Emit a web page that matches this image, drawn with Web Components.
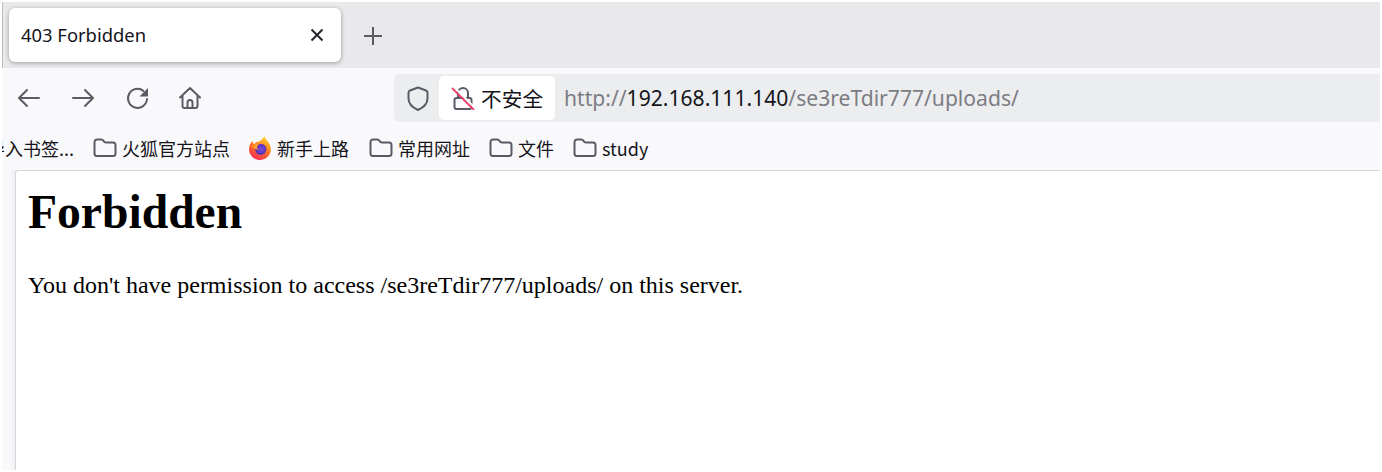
<!DOCTYPE html>
<html>
<head>
<meta charset="utf-8">
<title>403 Forbidden</title>
<style>
  html, body { margin: 0; height: 100%; background: #fff; overflow: hidden; }
  body { font-family: "Noto Sans", "Noto Sans CJK SC", sans-serif; }
  browser-window { height: 100%; }
</style>
</head>
<body>
<browser-window>
  <tab-strip title-text="403 Forbidden"></tab-strip>
  <nav-bar></nav-bar>
  <bookmark-bar>
    <span slot="cut">导入书签...</span>
    <bookmark-item>火狐官方站点</bookmark-item>
    <bookmark-item icon="firefox">新手上路</bookmark-item>
    <bookmark-item>常用网址</bookmark-item>
    <bookmark-item>文件</bookmark-item>
    <bookmark-item>study</bookmark-item>
  </bookmark-bar>
  <page-view>
    <h1 slot="heading">Forbidden</h1>
    <span slot="message">You don't have permission to access /se3reTdir777/uploads/ on this server.</span>
  </page-view>
</browser-window>

<script>
class BrowserWindow extends HTMLElement {
    constructor() {
        super();
        this.attachShadow({ mode: 'open' });
        this.shadowRoot.innerHTML = `
            <style>
                :host { display: flex; flex-direction: column; box-sizing: border-box; padding: 2px 2px 2px 2px; }
                ::slotted(page-view) { flex: 1; min-height: 0; }
            </style>
            <slot></slot>
        `;
    }
}

class TabStrip extends HTMLElement {
    constructor() {
        super();
        this.attachShadow({ mode: 'open' });
        this.shadowRoot.innerHTML = `
            <style>
                :host { display: flex; align-items: flex-start; height: 66px; background: #e9e9eb; border-left: 1px solid #bdbdbf; padding: 6px 0 0 6px; box-sizing: border-box; }
                .tab {
                    width: 332px; height: 54px; box-sizing: border-box; background: #fff; border-radius: 6px;
                    box-shadow: 0 1px 4px rgba(0,0,0,0.35);
                    display: flex; align-items: center; justify-content: space-between; padding: 0 16px 0 12px;
                    font: 18.4px "Noto Sans", "Noto Sans CJK SC", sans-serif; color: #15141a;
                }
                .label { margin-bottom: 2px; }
                svg { display: block; }
                .plus { margin: 18px 0 0 22px; }
            </style>
            <div class="tab">
                <span class="label"></span>
                <svg width="16" height="16" viewBox="0 0 16 16" fill="none" stroke="#26252b" stroke-width="2"><path d="M2.5 2.5l11 11M13.5 2.5l-11 11"/></svg>
            </div>
            <svg class="plus" width="20" height="20" viewBox="0 0 20 20" fill="none" stroke="#5b5b66" stroke-width="2"><path d="M10 1v18M1 10h18"/></svg>
        `;
    }
    connectedCallback() {
        this.shadowRoot.querySelector('.label').textContent = this.getAttribute('title-text');
    }
}

class NavBar extends HTMLElement {
    constructor() {
        super();
        this.attachShadow({ mode: 'open' });
        this.shadowRoot.innerHTML = `
            <style>
                :host { display: flex; align-items: center; height: 60px; background: #f9f9fb; box-sizing: border-box; padding: 0 0 0 15px; }
                svg { display: block; flex: none; }
                .btns { display: flex; gap: 30px; align-items: center; }
                .url {
                    margin-left: 191px; flex: 1; height: 48px; background: #ecedef; border-radius: 6px 0 0 6px;
                    display: flex; align-items: center; padding-left: 4px;
                }
                .shield { margin: 0 10px 0 9px; }
                .insecure {
                    display: flex; align-items: center; gap: 6px; height: 44px; width: 116px; box-sizing: border-box; padding-left: 12px;
                    background: #fff; border-radius: 5px; font: 20.7px "Noto Sans CJK SC", sans-serif; color: #15141a;
                }
                .addr { margin: 0 0 2px 9px; font: 21.1px "Noto Sans", sans-serif; color: #7c7c83; white-space: nowrap; }
                .addr b { font-weight: 400; color: #15141a; }
            </style>
            <div class="btns">
                <svg width="24" height="24" viewBox="0 0 24 24" fill="none" stroke="#5b5b66" stroke-width="2" stroke-linecap="round" stroke-linejoin="round"><path d="M2 12h20M10 4l-8 8 8 8"/></svg>
                <svg width="24" height="24" viewBox="0 0 24 24" fill="none" stroke="#5b5b66" stroke-width="2" stroke-linecap="round" stroke-linejoin="round"><path d="M2 12h20M14 4l8 8-8 8"/></svg>
                <svg width="24" height="24" viewBox="0 0 24 24" fill="none" stroke="#5b5b66" stroke-width="2" stroke-linecap="round" stroke-linejoin="round"><path d="M22 13a9.500 9.500 0 1 1-3.500-8"/><path d="M23 2v8.500h-8.500z" fill="#5b5b66" stroke="none"/></svg>
                <svg width="24" height="24" viewBox="0 0 24 24" fill="none" stroke="#5b5b66" stroke-width="2" stroke-linecap="round" stroke-linejoin="round"><path d="M1 11.500L11 2l10 9.500M3.500 9.500V20a2 2 0 0 0 2 2h11a2 2 0 0 0 2-2V9.500M8.500 22v-5.500a2.500 2.500 0 0 1 5 0V22"/></svg>
            </div>
            <div class="url">
                <svg class="shield" width="22" height="25" viewBox="0 0 22 25" fill="none" stroke="#5b5b66" stroke-width="2" stroke-linejoin="round"><path d="M11 1.500L19 4.500c1 .4 1.500 1 1.500 2V12.500c0 5-4 9-9.500 11.500C5.500 21.500 1.500 17.500 1.500 12.500V6.500c0-1 .5-1.600 1.500-2z"/></svg>
                <div class="insecure">
                    <svg width="24" height="24" viewBox="0 0 24 24" fill="none"><path d="M7 12V7a5 5 0 0 1 10 0v5" stroke="#5b5b66" stroke-width="2"/><rect x="3.500" y="12" width="17" height="11" rx="2" stroke="#5b5b66" stroke-width="2"/><path d="M3 1l21 21" stroke="#fff" stroke-width="2"/><path d="M1 2l22 22" stroke="#e8436a" stroke-width="1.800"/></svg>
                    <span>不安全</span>
                </div>
                <div class="addr">http://<b>192.168.111.140</b>/se3reTdir777/uploads/</div>
            </div>
        `;
    }
}

class BookmarkBar extends HTMLElement {
    constructor() {
        super();
        this.attachShadow({ mode: 'open' });
        this.shadowRoot.innerHTML = `
            <style>
                :host { display: flex; align-items: center; height: 42px; background: #f9f9fb; overflow: hidden; box-sizing: border-box; padding-bottom: 2px; font: 18px "Noto Sans CJK SC", sans-serif; color: #15141a; }
                .cut { width: 72px; flex: none; overflow: hidden; display: flex; justify-content: flex-end; white-space: nowrap; margin-right: 19px; }
                .cut ::slotted(span) { flex: none; }
                .items { display: flex; gap: 19px; }
            </style>
            <div class="cut"><slot name="cut"></slot></div>
            <div class="items"><slot></slot></div>
        `;
    }
}

class BookmarkItem extends HTMLElement {
    constructor() {
        super();
        this.attachShadow({ mode: 'open' });
        const firefox = `
            <svg width="24" height="24" viewBox="1 0.5 21.500 23.500" style="margin-left:-1px">
                <defs>
                    <linearGradient id="fx" x1="0.7" y1="0" x2="0.2" y2="1"><stop offset="0" stop-color="#ffd52e"/><stop offset="0.45" stop-color="#ff7a1f"/><stop offset="1" stop-color="#f4255e"/></linearGradient>
                    <radialGradient id="gl" cx="0.55" cy="0.5" r="0.5"><stop offset="0" stop-color="#7a4fd6"/><stop offset="1" stop-color="#5a2fb8"/></radialGradient>
                </defs>
                <path d="M16 0.500c0.500 2 2 3.500 3.500 5.500 2.500 3 3.500 7 2.500 10.500C20.500 21 16.500 24 12 24 6 24 1 19.500 1 13.500 1 10.500 2.500 7 4.500 5.500 4.500 7 5 8 6 8.500 7 7 9 6 11 6 13 4.500 15 3 16 0.500z" fill="url(#fx)"/>
                <circle cx="12.500" cy="13.500" r="5.500" fill="url(#gl)"/>
                <path d="M4 10.500c2-2 5-3 8-2.500 -1.500 0.500 -3 1.500 -3 3.500 0 1.500 1 2 2 2.500 -3 0 -5.500 -1 -7 -3.500z" fill="#ff9a2e"/>
            </svg>`;
        const folder = `
            <svg width="24" height="20" viewBox="0 0 24 20" fill="none" stroke="#5b5b66" stroke-width="2" stroke-linejoin="round"><path d="M1.500 4a2.500 2.500 0 0 1 2.500-2.500h4.500c1.500 0 2 1.500 3 2.500 0.500 0.500 1 0.500 2 0.500H20a2.500 2.500 0 0 1 2.500 2.500v8.500a2.500 2.500 0 0 1-2.500 2.500H4a2.500 2.500 0 0 1-2.500-2.500z"/></svg>`;
        this.shadowRoot.innerHTML = `
            <style>
                :host { display: flex; align-items: center; gap: 5px; white-space: nowrap; }
                :host([icon]) { margin-right: 1px; }
                svg { display: block; flex: none; }
            </style>
            ${this.getAttribute('icon') === 'firefox' ? firefox : folder}
            <slot></slot>
        `;
    }
}

class PageView extends HTMLElement {
    constructor() {
        super();
        this.attachShadow({ mode: 'open' });
        this.shadowRoot.innerHTML = `
            <style>
                :host { display: block; background: linear-gradient(to right, #f9f9fb 0, #f9f9fb 7px, #f0f0f2 13px); padding-left: 13px; }
                .page {
                    height: 100%; box-sizing: border-box; background: #fff; padding: 14px 12px;
                    border-left: 1px solid #d6d6d9; border-top: 1px solid #d6d6d9; border-top-left-radius: 3px;
                    font: 24px "Liberation Serif", serif; color: #000;
                }
                ::slotted(h1) { font: bold 47.6px "Liberation Serif", serif; margin: 0 0 32px; line-height: 55px; }
                p { margin: 0; line-height: 27px; }
            </style>
            <div class="page">
                <slot name="heading"></slot>
                <p><slot name="message"></slot></p>
            </div>
        `;
    }
}

customElements.define('browser-window', BrowserWindow);
customElements.define('tab-strip', TabStrip);
customElements.define('nav-bar', NavBar);
customElements.define('bookmark-bar', BookmarkBar);
customElements.define('bookmark-item', BookmarkItem);
customElements.define('page-view', PageView);
</script>
</body>
</html>
